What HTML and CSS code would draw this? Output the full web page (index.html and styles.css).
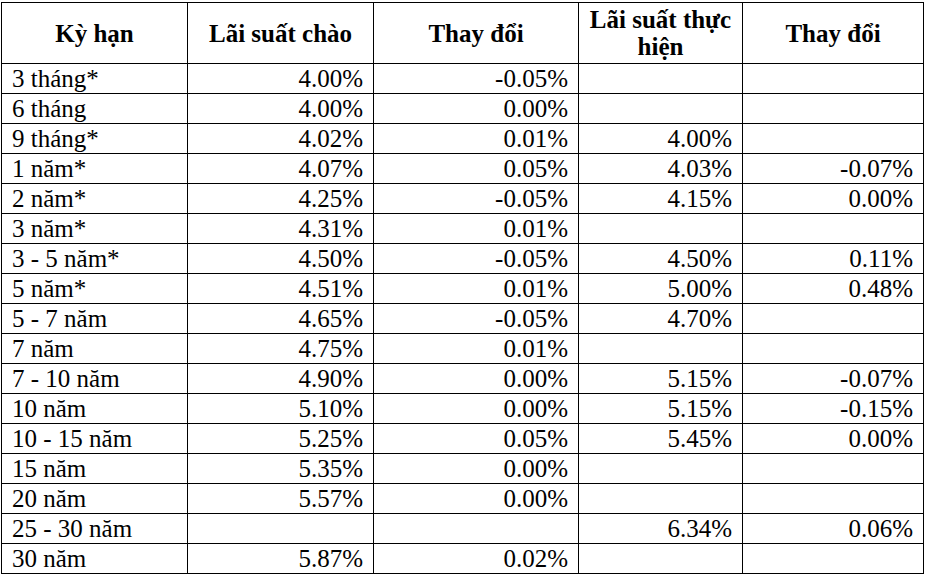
FILE: index.html
```html
<!DOCTYPE html>
<html lang="vi">
<head>
<meta charset="utf-8">
<title>Lãi suất</title>
<link rel="stylesheet" href="styles.css">
</head>
<body>
<table class="rates">
  <colgroup>
    <col class="c1"><col class="c2"><col class="c3"><col class="c4"><col class="c5">
  </colgroup>
  <thead>
    <tr>
      <th>Kỳ hạn</th>
      <th>Lãi suất chào</th>
      <th>Thay đổi</th>
      <th>Lãi suất thực hiện</th>
      <th>Thay đổi</th>
    </tr>
  </thead>
  <tbody>
    <tr><td>3 tháng*</td><td>4.00%</td><td>-0.05%</td><td></td><td></td></tr>
    <tr><td>6 tháng</td><td>4.00%</td><td>0.00%</td><td></td><td></td></tr>
    <tr><td>9 tháng*</td><td>4.02%</td><td>0.01%</td><td>4.00%</td><td></td></tr>
    <tr><td>1 năm*</td><td>4.07%</td><td>0.05%</td><td>4.03%</td><td>-0.07%</td></tr>
    <tr><td>2 năm*</td><td>4.25%</td><td>-0.05%</td><td>4.15%</td><td>0.00%</td></tr>
    <tr><td>3 năm*</td><td>4.31%</td><td>0.01%</td><td></td><td></td></tr>
    <tr><td>3 - 5 năm*</td><td>4.50%</td><td>-0.05%</td><td>4.50%</td><td>0.11%</td></tr>
    <tr><td>5 năm*</td><td>4.51%</td><td>0.01%</td><td>5.00%</td><td>0.48%</td></tr>
    <tr><td>5 - 7 năm</td><td>4.65%</td><td>-0.05%</td><td>4.70%</td><td></td></tr>
    <tr><td>7 năm</td><td>4.75%</td><td>0.01%</td><td></td><td></td></tr>
    <tr><td>7 - 10 năm</td><td>4.90%</td><td>0.00%</td><td>5.15%</td><td>-0.07%</td></tr>
    <tr><td>10 năm</td><td>5.10%</td><td>0.00%</td><td>5.15%</td><td>-0.15%</td></tr>
    <tr><td>10 - 15 năm</td><td>5.25%</td><td>0.05%</td><td>5.45%</td><td>0.00%</td></tr>
    <tr><td>15 năm</td><td>5.35%</td><td>0.00%</td><td></td><td></td></tr>
    <tr><td>20 năm</td><td>5.57%</td><td>0.00%</td><td></td><td></td></tr>
    <tr><td>25 - 30 năm</td><td></td><td></td><td>6.34%</td><td>0.06%</td></tr>
    <tr><td>30 năm</td><td>5.87%</td><td>0.02%</td><td></td><td></td></tr>
  </tbody>
</table>
</body>
</html>
```

FILE: styles.css
```css
html, body {
  margin: 0;
  padding: 0;
  background: #ffffff;
}

body {
  padding: 2px 0 0 1px;
  font-family: "Liberation Serif", "Times New Roman", serif;
  color: #000000;
}

.rates {
  border-collapse: collapse;
  table-layout: fixed;
  width: 922px;
  font-size: 25px;
}

.c1 { width: 186px; }
.c2 { width: 186px; }
.c3 { width: 205px; }
.c4 { width: 164px; }
.c5 { width: 181px; }

.rates th,
.rates td {
  border: 1px solid #000000;
  padding: 0 10px 0 10px;
  white-space: nowrap;
}

.rates th {
  height: 60px;
  font-weight: bold;
  text-align: center;
  vertical-align: middle;
  line-height: 27px;
  white-space: normal;
  padding: 0 10px;
}

.rates td {
  height: 29px;
  line-height: 29px;
  text-align: right;
  vertical-align: middle;
}

.rates td:first-child {
  text-align: left;
}
```
